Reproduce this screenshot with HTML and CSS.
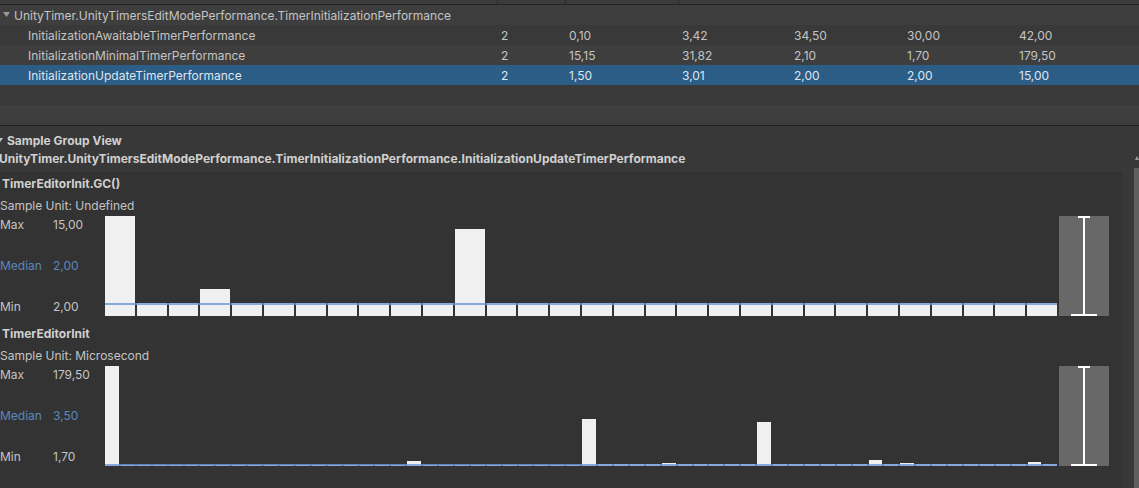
FILE: index.html
```html
<!DOCTYPE html>
<html>
<head>
<meta charset="utf-8">
<link rel="stylesheet" href="styles.css">
</head>
<body>
<div class="app">
  <div class="table">
    <div class="table-head">
      <span class="tick t1"></span><span class="tick t2"></span><span class="tick t3"></span>
    </div>
    <div class="row light group">
      <div class="name"><svg class="fold" width="7" height="6" viewBox="0 0 7 6"><path d="M0 0h7L3.5 5z" fill="#9a9a9a"/></svg>UnityTimer.UnityTimersEditModePerformance.TimerInitializationPerformance</div>
    </div>
    <div class="row dark">
      <div class="name child">InitializationAwaitableTimerPerformance</div>
      <div class="num">2</div><div class="num">0,10</div><div class="num">3,42</div><div class="num">34,50</div><div class="num">30,00</div><div class="num">42,00</div>
    </div>
    <div class="row light">
      <div class="name child">InitializationMinimalTimerPerformance</div>
      <div class="num">2</div><div class="num">15,15</div><div class="num">31,82</div><div class="num">2,10</div><div class="num">1,70</div><div class="num">179,50</div>
    </div>
    <div class="row selected">
      <div class="name child">InitializationUpdateTimerPerformance</div>
      <div class="num">2</div><div class="num">1,50</div><div class="num">3,01</div><div class="num">2,00</div><div class="num">2,00</div><div class="num">15,00</div>
    </div>
    <div class="row dark"></div>
    <div class="row light last"></div>
  </div>

  <div class="lower">
    <div class="content">
      <div class="section-title"><svg class="fold2" width="7" height="6" viewBox="0 0 7 6"><path d="M0 0h7L3.5 5z" fill="#c4c4c4"/></svg>Sample Group View</div>
      <div class="path">UnityTimer.UnityTimersEditModePerformance.TimerInitializationPerformance.InitializationUpdateTimerPerformance</div>
      <div class="panel">
        <div class="chart">
          <div class="chart-title">TimerEditorInit.GC()</div>
          <div class="chart-unit">Sample Unit: Undefined</div>
          <div class="plot">
            <div class="labels">
              <div class="lab"><span class="k">Max</span><span>15,00</span></div>
              <div class="lab median"><span class="k">Median</span><span>2,00</span></div>
              <div class="lab"><span class="k">Min</span><span>2,00</span></div>
            </div>
            <div class="bars wide">
              <div class="bar" style="height:100%"></div>
              <div class="bar" style="height:13.3%"></div>
              <div class="bar" style="height:13.3%"></div>
              <div class="bar" style="height:27%"></div>
              <div class="bar" style="height:13.3%"></div>
              <div class="bar" style="height:13.3%"></div>
              <div class="bar" style="height:13.3%"></div>
              <div class="bar" style="height:13.3%"></div>
              <div class="bar" style="height:13.3%"></div>
              <div class="bar" style="height:13.3%"></div>
              <div class="bar" style="height:13.3%"></div>
              <div class="bar" style="height:87%"></div>
              <div class="bar" style="height:13.3%"></div>
              <div class="bar" style="height:13.3%"></div>
              <div class="bar" style="height:13.3%"></div>
              <div class="bar" style="height:13.3%"></div>
              <div class="bar" style="height:13.3%"></div>
              <div class="bar" style="height:13.3%"></div>
              <div class="bar" style="height:13.3%"></div>
              <div class="bar" style="height:13.3%"></div>
              <div class="bar" style="height:13.3%"></div>
              <div class="bar" style="height:13.3%"></div>
              <div class="bar" style="height:13.3%"></div>
              <div class="bar" style="height:13.3%"></div>
              <div class="bar" style="height:13.3%"></div>
              <div class="bar" style="height:13.3%"></div>
              <div class="bar" style="height:13.3%"></div>
              <div class="bar" style="height:13.3%"></div>
              <div class="bar" style="height:13.3%"></div>
              <div class="bar" style="height:13.3%"></div>
              <div class="median-line m1"></div>
            </div>
            <div class="box">
              <div class="cap top"></div>
              <div class="stem"></div>
              <div class="cap bottom"></div>
            </div>
          </div>
        </div>

        <div class="chart">
          <div class="chart-title">TimerEditorInit</div>
          <div class="chart-unit">Sample Unit: Microsecond</div>
          <div class="plot">
            <div class="labels">
              <div class="lab"><span class="k">Max</span><span>179,50</span></div>
              <div class="lab median"><span class="k">Median</span><span>3,50</span></div>
              <div class="lab"><span class="k">Min</span><span>1,70</span></div>
            </div>
            <div class="bars narrow">
              <div class="bar" style="height:100%"></div>
              <div class="bar" style="height:1px"></div><div class="bar" style="height:1px"></div><div class="bar" style="height:1px"></div><div class="bar" style="height:1px"></div><div class="bar" style="height:1px"></div><div class="bar" style="height:1px"></div><div class="bar" style="height:1px"></div><div class="bar" style="height:1px"></div><div class="bar" style="height:1px"></div>
              <div class="bar" style="height:1px"></div><div class="bar" style="height:1px"></div><div class="bar" style="height:1px"></div><div class="bar" style="height:1px"></div><div class="bar" style="height:1px"></div><div class="bar" style="height:1px"></div><div class="bar" style="height:1px"></div><div class="bar" style="height:1px"></div><div class="bar" style="height:1px"></div>
              <div class="bar" style="height:5px"></div>
              <div class="bar" style="height:1px"></div><div class="bar" style="height:1px"></div><div class="bar" style="height:1px"></div><div class="bar" style="height:1px"></div><div class="bar" style="height:1px"></div><div class="bar" style="height:1px"></div><div class="bar" style="height:1px"></div><div class="bar" style="height:1px"></div><div class="bar" style="height:1px"></div><div class="bar" style="height:1px"></div>
              <div class="bar" style="height:47px"></div>
              <div class="bar" style="height:2px"></div><div class="bar" style="height:2px"></div><div class="bar" style="height:2px"></div><div class="bar" style="height:2px"></div>
              <div class="bar" style="height:3px"></div>
              <div class="bar" style="height:2px"></div><div class="bar" style="height:2px"></div><div class="bar" style="height:2px"></div><div class="bar" style="height:2px"></div><div class="bar" style="height:2px"></div>
              <div class="bar" style="height:44px"></div>
              <div class="bar" style="height:2px"></div><div class="bar" style="height:2px"></div><div class="bar" style="height:2px"></div><div class="bar" style="height:2px"></div><div class="bar" style="height:2px"></div><div class="bar" style="height:2px"></div>
              <div class="bar" style="height:6px"></div>
              <div class="bar" style="height:2px"></div>
              <div class="bar" style="height:3px"></div>
              <div class="bar" style="height:2px"></div><div class="bar" style="height:2px"></div><div class="bar" style="height:2px"></div><div class="bar" style="height:2px"></div><div class="bar" style="height:2px"></div><div class="bar" style="height:2px"></div><div class="bar" style="height:2px"></div>
              <div class="bar" style="height:4px"></div>
              <div class="bar" style="height:2px"></div>
              <div class="median-line m2"></div>
            </div>
            <div class="box">
              <div class="cap top"></div>
              <div class="stem"></div>
              <div class="cap bottom"></div>
            </div>
          </div>
        </div>
      </div>
    </div>
    <div class="scrollbar">
      <svg class="arrow" width="5" height="5" viewBox="0 0 5 5"><path d="M3 0L5 4H1z" fill="#9a9a9a"/></svg>
      <div class="thumb"></div>
    </div>
  </div>
</div>
</body>
</html>
```
FILE: styles.css
```css
* { box-sizing: border-box; }
html, body { margin: 0; padding: 0; }
body {
  width: 1139px;
  height: 488px;
  overflow: hidden;
  background: #383838;
  font-family: Inter, "Noto Sans", sans-serif;
  font-size: 12px;
  color: #c4c4c4;
}
.app { display: flex; flex-direction: column; height: 488px; }

.table { display: flex; flex-direction: column; }
.table-head {
  height: 5px;
  background: #3c3c3c;
  border-bottom: 1px solid #232323;
  position: relative;
}
.tick { position: absolute; top: 0; width: 1px; height: 4px; background: #2a2a2a; }
.t1 { left: 497px; }
.t2 { left: 565px; }
.t3 { left: 678px; }

.row {
  height: 20px;
  display: grid;
  grid-template-columns: 497px 68px 113px 112px 113px 112px 1fr;
  align-items: center;
  white-space: nowrap;
}
.row.light { background: #3e3e3e; }
.row.dark { background: #393939; }
.row.selected { background: #2c5d87; color: #dfe6ee; }
.row.last { height: 21px; border-bottom: 1px solid #1f1f1f; }
.name { display: flex; align-items: center; padding-left: 3px; }
.name.child { padding-left: 28px; }
.fold { margin-right: 4px; }
.num { padding-left: 4px; }

.lower { flex: 1; display: flex; }
.content { width: 1134px; display: flex; flex-direction: column; }
.section-title {
  margin-top: 6px;
  height: 18px;
  line-height: 18px;
  font-weight: 700;
  display: flex;
  align-items: center;
  color: #d0d0d0;
}
.fold2 { margin-left: -4px; margin-right: 4px; }
.path {
  height: 18px;
  line-height: 18px;
  font-weight: 700;
  margin-left: -1px;
  white-space: nowrap;
  color: #d0d0d0;
}
.panel {
  margin-top: 4px;
  width: 1122px;
  flex: 1;
  background: #333333;
  display: flex;
  flex-direction: column;
  gap: 6px;
}
.chart { display: flex; flex-direction: column; }
.chart-title {
  height: 23px;
  line-height: 23px;
  padding-left: 2px;
  font-weight: 700;
  color: #d0d0d0;
}
.chart-unit { height: 21px; line-height: 21px; }
.plot { display: flex; height: 100px; }
.labels {
  width: 105px;
  display: flex;
  flex-direction: column;
  justify-content: space-between;
}
.lab { display: flex; height: 18px; line-height: 18px; }
.lab .k { width: 53px; }
.lab.median { color: #5a87bb; }

.bars {
  width: 952px;
  display: flex;
  align-items: flex-end;
  gap: 2px;
  position: relative;
}
.bar { flex: 1; background: #f0f0f0; }
.median-line {
  position: absolute;
  left: 0;
  right: 0;
  height: 2px;
  background: rgba(110, 150, 225, 0.8);
}
.m1 { bottom: 11px; }
.m2 { bottom: 0; }

.box {
  margin-left: 2px;
  width: 50px;
  background: #686868;
  display: flex;
  flex-direction: column;
  align-items: center;
}
.cap { height: 2px; background: #ffffff; }
.cap.top { width: 12px; }
.cap.bottom { width: 26px; }
.stem { flex: 1; width: 2px; background: #ffffff; }

.scrollbar {
  width: 5px;
  display: flex;
  flex-direction: column;
  padding-top: 30px;
}
.arrow { display: block; margin-bottom: 7px; }
.thumb { flex: 1; background: #5f5f5f; }
```
